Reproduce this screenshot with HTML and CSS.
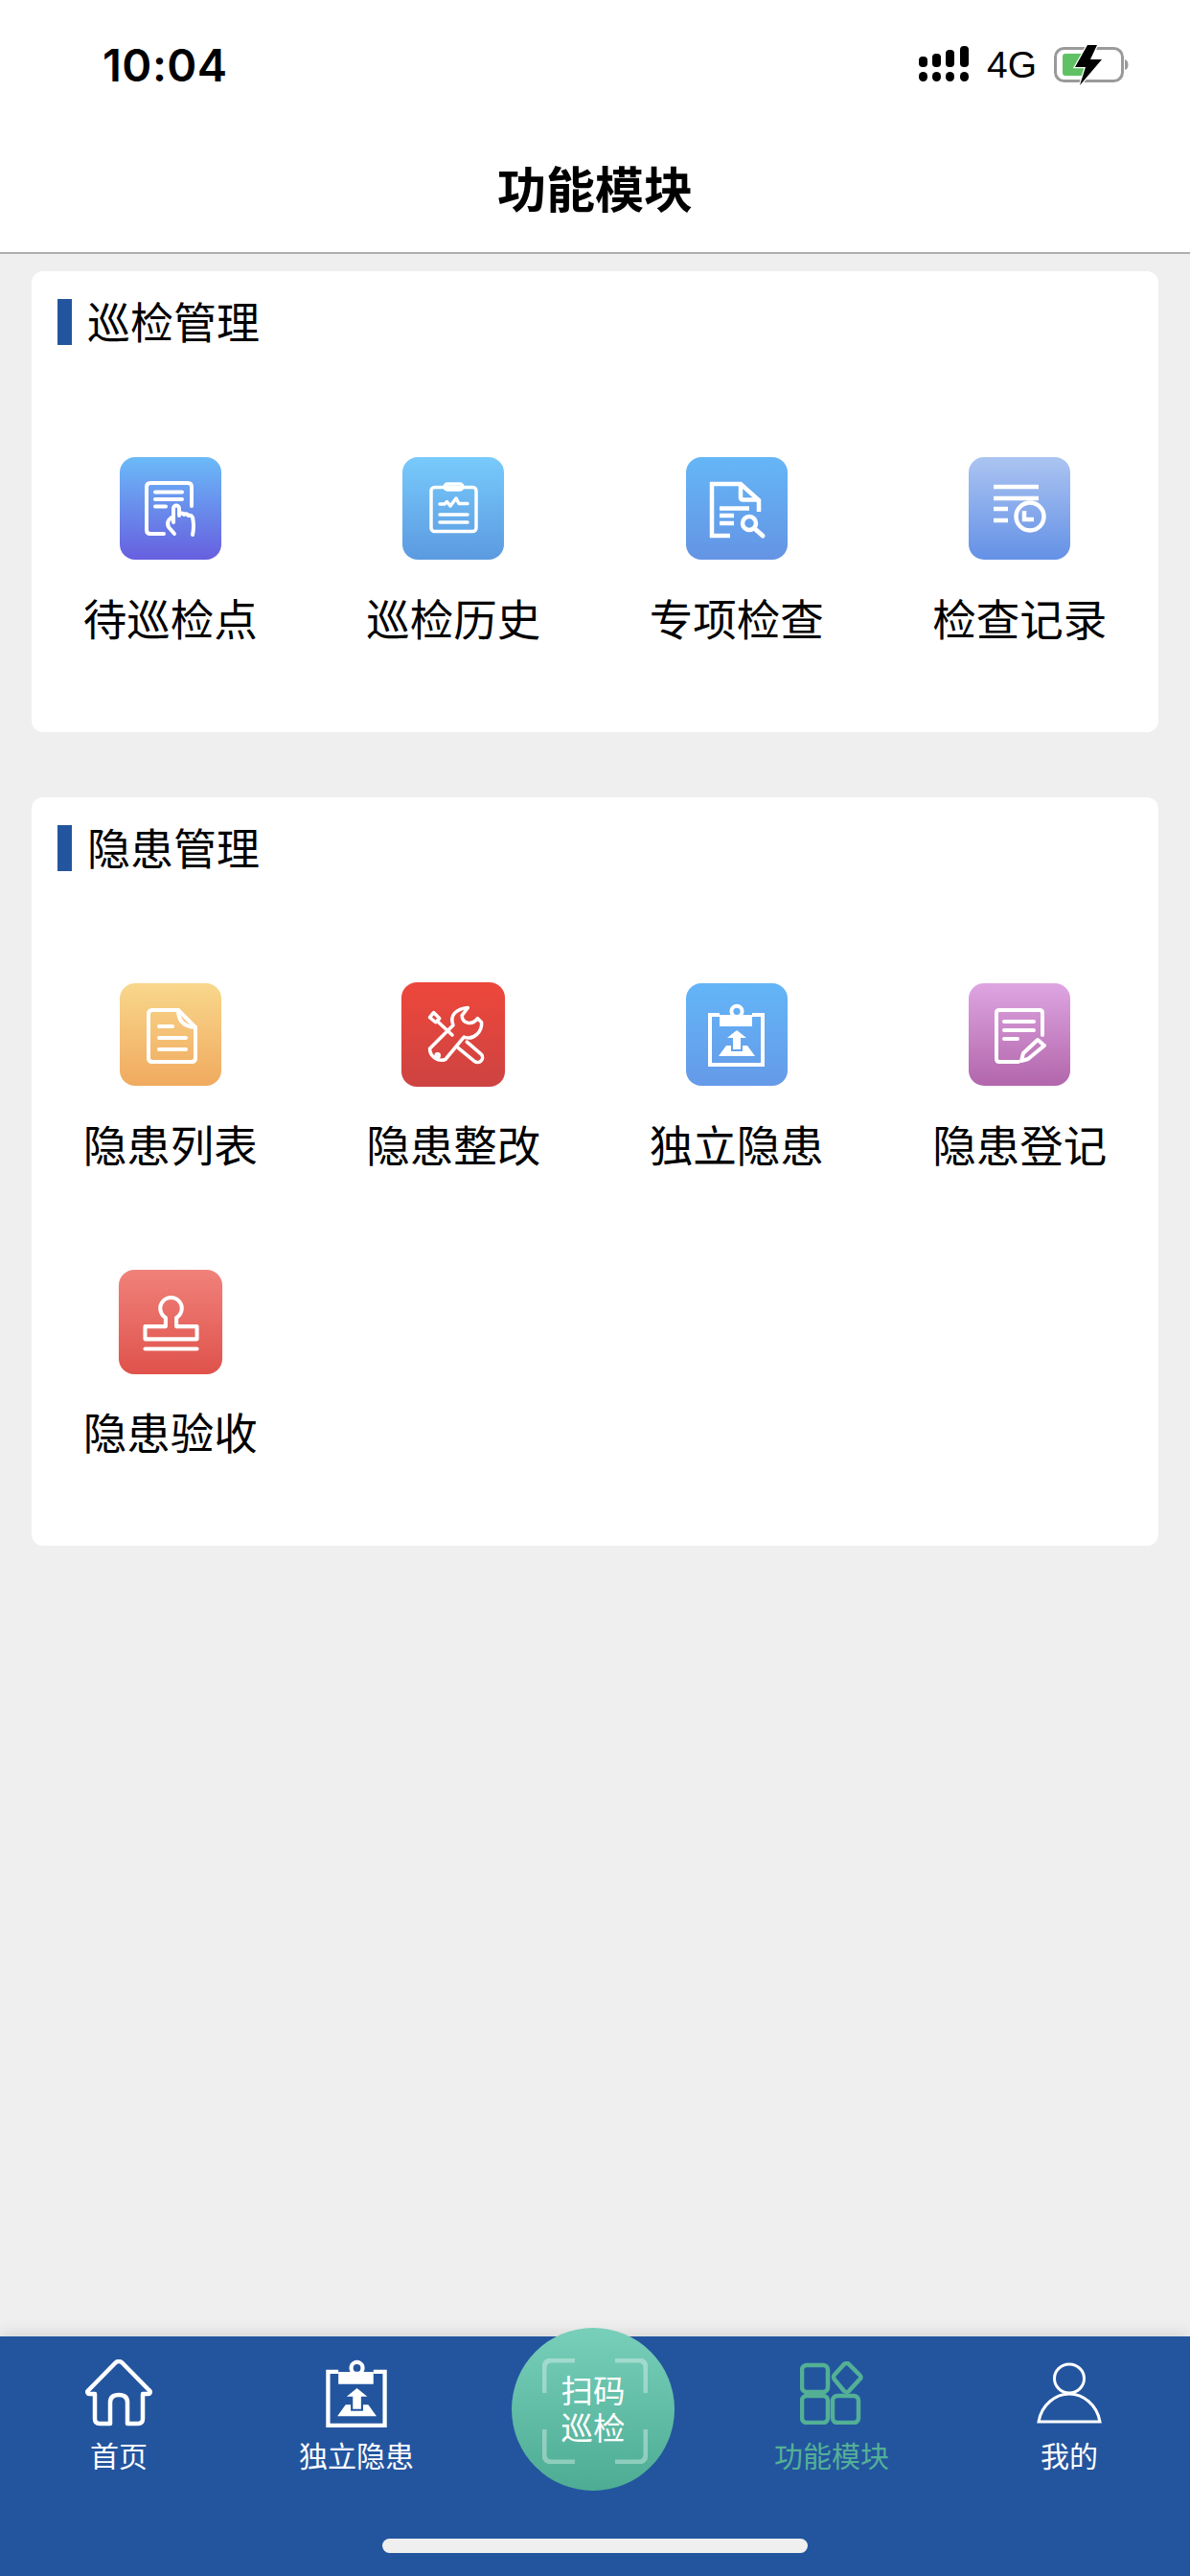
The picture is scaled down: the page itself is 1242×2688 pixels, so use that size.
FILE: index.html
```html
<!DOCTYPE html>
<html lang="zh-CN">
<head>
<meta charset="utf-8">
<title>功能模块</title>
<link rel="stylesheet" href="styles.css">
</head>
<body>
<svg class="defs" width="0" height="0" aria-hidden="true">
  <symbol id="upload-board" viewBox="23 19 59 66">
    <path class="sym-line" d="M35 31H25V83H80V31H69"/>
    <path class="sym-fill" fill-rule="evenodd" d="M35 31H46.500A7.500 7.500 0 1 1 59.500 31H69V43H35ZM53 23.700a3.600 3.600 0 1 0 0 7.200a3.600 3.600 0 0 0 0-7.200Z"/>
    <path class="sym-fill" d="M53 47L63 55H57V67H49V55H43ZM42 63H47V69H59V63H64L72 74H34Z"/>
  </symbol>
</svg>
<div class="page">
  <header class="top">
    <div class="status">
      <span class="time">10:04</span>
      <div class="status-right">
        <svg class="signal" width="52" height="38" viewBox="0 0 52 38">
          <rect x="0" y="11" width="9" height="11" rx="4"/><rect x="14" y="8" width="9" height="14" rx="4"/><rect x="28" y="4" width="9" height="18" rx="4"/><rect x="43" y="0" width="9" height="22" rx="4"/>
          <rect x="0" y="27" width="9" height="10" rx="4.500"/><rect x="14" y="27" width="9" height="10" rx="4.500"/><rect x="28" y="27" width="9" height="10" rx="4.500"/><rect x="43" y="27" width="9" height="10" rx="4.500"/>
        </svg>
        <span class="net">4G</span>
        <svg class="battery" width="78" height="42" viewBox="0 0 78 42">
          <rect x="1.500" y="3.500" width="70" height="34" rx="9" fill="none" stroke="#9a9a9a" stroke-width="3"/>
          <path d="M74 15q3.500 1 3.500 5.500T74 26Z" fill="#9a9a9a"/>
          <path d="M9 12q0-3 3-3H36V32H12q-3 0-3-3Z" fill="#5fc163"/>
          <path d="M45 0H35L22 23H33L27 42L50 15H38Z" fill="#000" stroke="#fff" stroke-width="2.500" paint-order="stroke"/>
        </svg>
      </div>
    </div>
    <h1 class="title">功能模块</h1>
  </header>

  <main class="content">
    <section class="card">
      <h2 class="card-title">巡检管理</h2>
      <div class="grid">
        <a class="item">
          <span class="tile g-violet">
            <svg viewBox="0 0 106 107"><g class="ico">
              <path d="M46 80H32q-4 0-4-4V31q0-4 4-4H71q4 0 4 4V51"/>
              <path d="M37 36.500H65M37 44H65M37 51.500H48"/>
              <path d="M57 80L51 73Q49 69 51 66L54 63M56 68V53.500a3 3 0 0 1 6 0V61M62 60q3-3 5 0q3-2 4.500 1q3-1 4.500 2Q78 72 76 81"/>
            </g></svg>
          </span>
          <span class="label">待巡检点</span>
        </a>
        <a class="item">
          <span class="tile g-sky">
            <svg viewBox="0 0 106 107"><g class="ico thin">
              <rect x="30" y="31.500" width="47" height="46" rx="3.500"/>
              <rect x="44" y="28" width="19" height="6" rx="3"/>
              <path d="M39 49H44L46.500 46.500L50 51L56 43L59 48.500H68M39 60H68M39 68H68"/>
            </g></svg>
          </span>
          <span class="label">巡检历史</span>
        </a>
        <a class="item">
          <span class="tile g-blue">
            <svg viewBox="0 0 106 107"><g class="ico square">
              <path d="M46 82H27V28H57L76 45V57"/>
              <path d="M57 28V42q0 2.500 2.500 2.500H76"/>
              <path d="M35 53.500H66M35 61H50M35 69H50"/>
              <circle cx="66" cy="69" r="7"/>
              <path d="M71.500 74.500L80 82" class="round-end"/>
            </g></svg>
          </span>
          <span class="label">专项检查</span>
        </a>
        <a class="item">
          <span class="tile g-periwinkle">
            <svg viewBox="0 0 106 107"><g class="ico square">
              <path d="M26 31H73M26 43H73M26 54H41M26 66H41"/>
              <circle cx="64" cy="62" r="14.500"/>
              <path d="M58 56V65H68"/>
            </g></svg>
          </span>
          <span class="label">检查记录</span>
        </a>
      </div>
    </section>

    <section class="card">
      <h2 class="card-title">隐患管理</h2>
      <div class="grid">
        <a class="item">
          <span class="tile g-amber">
            <svg viewBox="0 0 106 107"><g class="ico">
              <path d="M61 28H34q-4 0-4 4V78q0 4 4 4H75q4 0 4-4V46Z"/>
              <path d="M61 28Q61 45 79 46M41 45H55M41 57H69M41 69H69"/>
            </g></svg>
          </span>
          <span class="label">隐患列表</span>
        </a>
        <a class="item">
          <span class="tile tile-lg g-red">
            <svg viewBox="0 0 106 107"><g class="ico thin">
              <path d="M29 68L53 44C49 34 56 27 68 26L62 34C62 42 72 45 78 37L82 41C83 50 74 60 64 56L45 79A12 12 0 0 1 29 68Z"/>
              <circle cx="37" cy="75" r="1.500"/>
              <path d="M67 61L82 74A5 5 0 0 1 75 81L58 67M38 41L52 54"/>
              <path d="M29 36L33 31L39 37L35 41Z"/>
            </g></svg>
          </span>
          <span class="label">隐患整改</span>
        </a>
        <a class="item">
          <span class="tile g-blue2">
            <svg class="board" width="59" height="66"><use href="#upload-board"/></svg>
          </span>
          <span class="label">独立隐患</span>
        </a>
        <a class="item">
          <span class="tile g-purple">
            <svg viewBox="0 0 106 107"><g class="ico">
              <path d="M52 82H32q-3 0-3-3V31q0-3 3-3H74q3 0 3 3V54"/>
              <path d="M37 40H68M37 49H68M37 58H51"/>
              <path d="M72 59L79 65L62 79L55 81L57 73Z"/>
            </g></svg>
          </span>
          <span class="label">隐患登记</span>
        </a>
        <a class="item">
          <span class="tile tile-lg g-coral">
            <svg viewBox="0 0 106 107"><g class="ico">
              <path d="M48 49A11 11 0 1 1 59 49V58H80V71H27V58H48Z"/>
              <path d="M27 81H80"/>
            </g></svg>
          </span>
          <span class="label">隐患验收</span>
        </a>
      </div>
    </section>
  </main>

  <nav class="tabbar">
    <a class="tab">
      <span class="tab-icon">
        <svg width="70" height="70" viewBox="0 0 70 70"><path class="tab-line" d="M10 36H4.500a2 2 0 0 1-1.500-3.500L31.500 3.500q3.500-3 7 0L67 32.500A2 2 0 0 1 65.500 36H60V62q0 5-5 5H44V45q0-8-9-8t-9 8V67H15q-5 0-5-5Z"/></svg>
      </span>
      <span class="tab-label">首页</span>
    </a>
    <a class="tab">
      <span class="tab-icon">
        <svg class="tab-board" width="64" height="71"><use href="#upload-board"/></svg>
      </span>
      <span class="tab-label">独立隐患</span>
    </a>
    <a class="tab tab-scan">
      <span class="scan">
        <svg class="scan-frame" width="110" height="110" viewBox="0 0 110 110">
          <path d="M2 36V10q0-8 8-8H34M76 2H100q8 0 8 8V36M108 74V100q0 8-8 8H76M34 108H10q-8 0-8-8V74"/>
        </svg>
        <span class="scan-text">扫码<br>巡检</span>
      </span>
    </a>
    <a class="tab tab-active">
      <span class="tab-icon">
        <svg width="66" height="66" viewBox="0 0 66 66">
          <g class="tab-line-green">
            <rect x="2" y="4" width="27" height="28" rx="5"/>
            <rect x="2" y="36" width="27" height="28" rx="5"/>
            <rect x="34" y="36" width="27" height="28" rx="5"/>
            <path d="M46 3q3-2 5 0L62 14q3 3 0 5L51 31q-2 2-5 0L36 19q-2-3 0-5Z"/>
          </g>
        </svg>
      </span>
      <span class="tab-label">功能模块</span>
    </a>
    <a class="tab">
      <span class="tab-icon">
        <svg width="68" height="64" viewBox="0 0 68 64">
          <g class="tab-line-thin">
            <ellipse cx="34" cy="17" rx="15.500" ry="15"/>
            <path d="M2 62C5 44 20 33 34 33S63 44 66 62Z"/>
          </g>
        </svg>
      </span>
      <span class="tab-label">我的</span>
    </a>
    <span class="home-indicator"></span>
  </nav>
</div>
</body>
</html>
```

FILE: styles.css
```css
* { box-sizing: border-box; }
html, body { margin: 0; padding: 0; }
body {
  width: 1242px;
  height: 2688px;
  overflow: hidden;
  background: #efefef;
  color: #000;
  font-family: "Noto Sans CJK SC", "Noto Sans", sans-serif;
}
.defs { position: absolute; }
.page { height: 2688px; display: flex; flex-direction: column; }

/* Header */
.top { background: #fff; border-bottom: 2px solid #aeaeae; height: 265px; flex: none; }
.status {
  height: 132px;
  padding: 3px 64px 0 107px;
  display: flex;
  justify-content: space-between;
  align-items: center;
}
.time {
  font-family: Inter, "Liberation Sans", sans-serif;
  font-size: 47px;
  font-weight: 600;
  line-height: 48px;
  letter-spacing: 0.5px;
}
.status-right { display: flex; align-items: center; }
.signal { display: block; margin-right: 19px; margin-top: -1px; }
.net {
  font-family: "Liberation Sans", sans-serif;
  font-size: 39px;
  line-height: 40px;
  margin-right: 18px;
}
.battery { display: block; }
.title {
  margin: 0;
  height: 131px;
  text-align: center;
  font-size: 51px;
  font-weight: 700;
  line-height: 127px;
}

/* Cards */
.content {
  flex: 1;
  padding: 18px 33px 0;
  display: flex;
  flex-direction: column;
  gap: 68px;
}
.card {
  background: #fff;
  border-radius: 12px;
  padding: 29px 0 88px;
}
.card-title {
  margin: 0 0 117px 27px;
  height: 48px;
  border-left: 15px solid #23559f;
  padding-left: 16px;
  font-size: 45px;
  font-weight: 400;
  line-height: 45px;
}
.grid {
  margin: 0 -3px;
  display: grid;
  grid-template-columns: repeat(4, 295.500px);
  row-gap: 101px;
}
.item { display: flex; flex-direction: column; align-items: center; }
.label { margin: 30px 0 2px; font-size: 45.500px; line-height: 60px; white-space: nowrap; }

.tile {
  width: 106px;
  height: 107px;
  border-radius: 16px;
  display: flex;
  align-items: center;
  justify-content: center;
}
.tile svg { display: block; }
.tile > svg:not(.board) { width: 106px; height: 107px; }
.tile-lg { transform: scale(1.02); }
.board { color: #fff; }

.g-violet { background: linear-gradient(#6bbaf8, #675fdf); }
.g-sky { background: linear-gradient(#78cafc, #5b9ae0); }
.g-blue { background: linear-gradient(#65b6f7, #6494e4); }
.g-periwinkle { background: linear-gradient(#abc4f1, #6491e6); }
.g-amber { background: linear-gradient(#f8d78c, #f0aa5f); }
.g-red { background: linear-gradient(#ee473b, #cd4341); }
.g-blue2 { background: linear-gradient(#63b5f8, #659ae8); }
.g-purple { background: linear-gradient(#dea5e2, #b266ab); }
.g-coral { background: linear-gradient(#f0827b, #df524b); }

.ico { fill: none; stroke: #fff; stroke-width: 4; stroke-linecap: round; stroke-linejoin: round; }
.ico.thin { stroke-width: 3.500; }
.ico.square { stroke-width: 4.500; stroke-linecap: butt; stroke-linejoin: miter; }
.ico .round-end { stroke-linecap: round; stroke-width: 5; }

.sym-line { fill: none; stroke: #fff; stroke-width: 4; }
.sym-fill { fill: #fff; }

/* Tab bar */
.tabbar {
  flex: none;
  position: relative;
  height: 250px;
  padding: 0 2px 0 0;
  background: #23559f;
  box-shadow: 0 -4px 14px rgba(0, 0, 0, 0.1);
  display: grid;
  grid-template-columns: repeat(5, 1fr);
  align-items: start;
}
.tab { display: flex; flex-direction: column; align-items: center; color: #fff; }
.tab-icon {
  height: 72px;
  margin-top: 23px;
  display: flex;
  align-items: center;
  justify-content: center;
}
.tab-icon svg { display: block; }
.tab-label { margin-top: 6px; font-size: 30px; line-height: 44px; white-space: nowrap; }
.tab-active { color: #53b095; }
.tab-line { fill: none; stroke: #fff; stroke-width: 4.500; stroke-linejoin: round; }
.tab-line-green { fill: none; stroke: #53b095; stroke-width: 4.500; }
.tab-line-thin { fill: none; stroke: #fff; stroke-width: 3; }

.scan {
  position: absolute;
  left: 534px;
  top: -9px;
  width: 170px;
  height: 170px;
  border-radius: 50%;
  background: linear-gradient(#78cfba, #4dac93);
  display: flex;
  align-items: center;
  justify-content: center;
}
.scan-frame {
  position: absolute;
  left: 32px;
  top: 32px;
  fill: none;
  stroke: rgba(255, 255, 255, 0.35);
  stroke-width: 5;
}
.scan-text {
  color: #fff;
  font-size: 33.500px;
  line-height: 39px;
  text-align: center;
  font-weight: 400;
  margin-top: -5px;
}
.home-indicator {
  position: absolute;
  left: 399px;
  top: 211px;
  width: 444px;
  height: 15px;
  border-radius: 8px;
  background: #efefef;
}
```
